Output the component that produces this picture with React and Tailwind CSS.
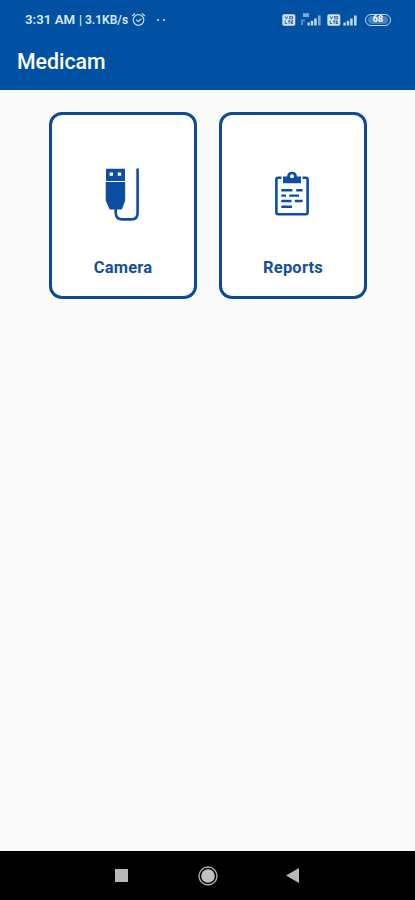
import React from "react";

const AlarmIcon = () => (
  <svg width="15" height="15" viewBox="0 0 15 15" fill="none" stroke="#c9dcf0" strokeWidth="1.2">
    <circle cx="7.5" cy="8" r="5.3" />
    <path d="M1.2 4L4 1.4M13.8 4L11 1.4M5 7.6L7.3 9.5L10.4 6.6" />
  </svg>
);

// Small VoLTE badge
const VolteIcon = () => (
  <svg width="14" height="12" viewBox="0 0 14 12">
    <rect x="0.3" y="0.3" width="13" height="11.4" rx="1.8" fill="#d3e2f2" />
    <path
      d="M3 2.3L4.4 5L5.8 2.3M7.6 2.6H10.6V4.8H7.6ZM3.2 6.6V9.5H5.2M6 6.9H8.4M7.2 6.9V9.8M11 6.9H9.2V9.5H11M9.2 8.2H11"
      fill="none"
      stroke="#1a5aa6"
      strokeWidth="0.9"
    />
  </svg>
);

const SignalIcon = ({ data }) => (
  <svg width="22" height="15" viewBox="0 0 22 15" fill="#c3d8ee">
    {data && (
      <>
        <path d="M2 1.2H8V5H2Z" opacity="0.65" />
        <path d="M0 7.5H4V9.5H2V13H0Z" opacity="0.45" />
      </>
    )}
    <rect x="6.4" y="10.5" width="2.4" height="3" />
    <rect x="9.8" y="8.8" width="2.4" height="4.7" />
    <rect x="13.2" y="6.5" width="2.5" height="7" />
    <rect x="17" y="3.5" width="2.6" height="10" opacity={data ? 0.65 : 1} />
  </svg>
);

const CameraIcon = () => (
  <svg width="34" height="54" viewBox="0 0 34 54" fill="#0b4ea2">
    <path
      fillRule="evenodd"
      d="M1 0.7H20V13.1H1ZM4.6 4.4V7.7H8V4.4ZM12.7 4.4V7.7H16.2V4.4Z"
    />
    <path d="M0.7 14.1H20.2V32.6L16.8 41.6H4.7L0.7 32.6Z" />
    <path
      d="M10.7 41V44.5Q10.7 51.4 17.5 51.4H26.5Q32.6 51.4 32.6 45V0.4"
      fill="none"
      stroke="#0b4ea2"
      strokeWidth="2.6"
    />
  </svg>
);

const ReportsIcon = () => (
  <svg width="34" height="45" viewBox="0 0 34 45">
    <path
      d="M6.5 6.7H3.3Q1.4 6.7 1.4 8.6V41.2Q1.4 43.2 3.3 43.2H30.7Q32.6 43.2 32.6 41.2V8.6Q32.6 6.7 30.7 6.7H27.5"
      fill="none"
      stroke="#0b4ea2"
      strokeWidth="2.6"
    />
    <path
      fillRule="evenodd"
      fill="#0b4ea2"
      d="M8 5.6H12Q12.4 0.8 17 0.8Q21.6 0.8 22 5.6H26V11.4Q26 12.3 25.2 12.3H8.8Q8 12.3 8 11.4ZM17 3.2A2 2 0 1 0 17 7.2A2 2 0 1 0 17 3.2Z"
    />
    <path
      d="M6.3 19.3H17.4M21.2 19.3H27.6M6.3 24.6H11M14.2 24.6H24M6.3 30H16.5M19.8 30H27.6M6.3 35.8H17"
      stroke="#0b4ea2"
      strokeWidth="2.4"
    />
  </svg>
);

const Card = ({ title, children }) => (
  <button className="flex h-[187px] w-[148px] flex-col items-center rounded-[13px] border-3 border-[#0d4a94] bg-white">
    <div className="mt-[53px] mr-[2px] flex h-[54px] items-center justify-center">{children}</div>
    <span className="mt-[34px] text-[16.5px] leading-[24px] font-bold tracking-[0.2px] text-[#164f96]">
      {title}
    </span>
  </button>
);

const App = () => {
  return (
    <div className="flex h-screen w-full flex-col bg-[#fafafa] font-['Roboto',sans-serif]">
      {/* Header Start */}
      <header className="h-[90px] bg-[#0050a3] text-white">
        <div className="flex h-[39px] items-center pl-[25px] text-[#dce9f6]">
          <span className="w-[51px] text-[13.3px] font-semibold whitespace-nowrap">3:31 AM</span>
          <span className="ml-[3px] w-[50px] text-[12px] font-semibold whitespace-nowrap">
            | 3.1KB/s
          </span>
          <span className="ml-[2px]">
            <AlarmIcon />
          </span>
          <span className="ml-[11px] flex gap-[4px]">
            <i className="size-[2px] rounded-full bg-[#dce9f6]" />
            <i className="size-[2px] rounded-full bg-[#dce9f6]" />
          </span>
          <div className="mr-[24px] ml-auto flex items-center">
            <VolteIcon />
            <span className="ml-[5px] -mt-[1px]">
              <SignalIcon data />
            </span>
            <span className="ml-[4px]">
              <VolteIcon />
            </span>
            <span className="-ml-[4px] -mt-[1px]">
              <SignalIcon />
            </span>
            <span className="ml-[6px] flex h-[12px] w-[26px] items-center justify-center rounded-full border border-[#c9dcf0]">
              <span className="flex h-[8px] w-[20px] items-center justify-center rounded-full bg-[#4a81bd] text-[9px] font-bold text-white">
                68
              </span>
            </span>
          </div>
        </div>
        <h1 className="pl-[17px] text-[21.3px] leading-[46px] font-medium">Medicam</h1>
      </header>
      {/* Header End */}

      <main className="flex flex-1 items-start gap-[22px] pt-[22px] pl-[49px]">
        <Card title="Camera">
          <CameraIcon />
        </Card>
        <Card title="Reports">
          <div className="pb-[3px]">
            <ReportsIcon />
          </div>
        </Card>
      </main>

      {/* Navigation Bar */}
      <nav className="flex h-[49px] items-center bg-black pl-[115px]">
        <div className="size-[13px] bg-[#b8b8b8]" />
        <svg className="ml-[70px]" width="20" height="20" viewBox="0 0 20 20">
          <circle cx="10" cy="10" r="9" fill="none" stroke="#aaaaaa" strokeWidth="1.4" />
          <circle cx="10" cy="10" r="6.8" fill="#c0c0c0" />
        </svg>
        <svg className="ml-[68px]" width="13" height="15" viewBox="0 0 13 15">
          <path d="M13 0V15L0 7.5Z" fill="#b8b8b8" />
        </svg>
      </nav>
    </div>
  );
};

export default App;
